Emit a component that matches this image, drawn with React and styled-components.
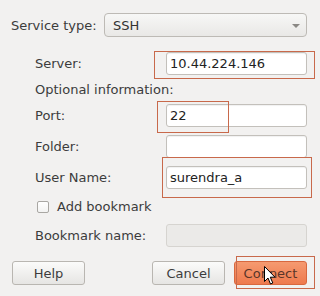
import React from 'react';
import styled, { createGlobalStyle, css } from 'styled-components';

const Global = createGlobalStyle`
  html, body {
    margin: 0;
    background: #f2f1f0;
  }
  body {
    font-family: "DejaVu Sans", "Liberation Sans", sans-serif;
    font-size: 13px;
    color: #3c3c3c;
  }
`

const Page = styled.div`
  width: 320px;
  height: 296px;
  box-sizing: border-box;
  padding: 13px 13px 0 11px;
  overflow: hidden;
`

const TopRow = styled.div`
  display: flex;
  align-items: center;
  height: 24px;
`

const TopLabel = styled.span`
  width: 93px;
`

const Combo = styled.div`
  flex: 1;
  height: 24px;
  box-sizing: border-box;
  display: flex;
  align-items: center;
  justify-content: space-between;
  padding: 0 6px 0 8px;
  border: 1px solid #bdbab5;
  border-radius: 4px;
  background: linear-gradient(#f7f7f6, #e9e8e6);
  color: #333;
`

const Arrow = styled.span`
  width: 0;
  height: 0;
  border-left: 4px solid transparent;
  border-right: 4px solid transparent;
  border-top: 4px solid #8a8884;
  margin-top: 1px;
`

const Form = styled.div`
  display: grid;
  grid-template-columns: 131px 1fr;
  row-gap: 8px;
  align-items: center;
  padding-left: 24px;
  margin-top: 15px;
`

const Label = styled.span`
  line-height: 23px;
`

const Wide = styled.div`
  grid-column: 1 / 3;
  display: flex;
  align-items: center;
  height: ${p => p.$h || 13}px;
`

const Field = styled.div`
  position: relative;
  height: 23px;
`

const Input = styled.div`
  height: 100%;
  box-sizing: border-box;
  padding-left: 3px;
  display: flex;
  align-items: center;
  border: 1px solid #c3c0bb;
  border-radius: 3px;
  background: #fff;
  box-shadow: inset 0 1px 1px rgba(0, 0, 0, 0.06);
  color: #222;
  ${p => p.$disabled && css`
    background: #ebeae8;
    border-color: #d6d4d0;
    box-shadow: none;
  `}
`

const Mark = styled.div`
  position: absolute;
  border: 1px solid #c8694b;
  pointer-events: none;
  left: ${p => p.$l}px;
  top: ${p => p.$t}px;
  ${p => p.$w ? `width: ${p.$w}px;` : `right: ${p.$r}px;`}
  bottom: ${p => p.$b}px;
`

const Check = styled.span`
  width: 12px;
  height: 12px;
  box-sizing: border-box;
  margin: 0 8px 0 2px;
  border: 1px solid #a9a7a3;
  border-radius: 2px;
  background: linear-gradient(#fff, #f3f3f2);
`

const Buttons = styled.div`
  display: flex;
  justify-content: space-between;
  margin-top: 14px;
  padding-left: 1px;
`

const Group = styled.div`
  display: flex;
  gap: 9px;
`

const Button = styled.div`
  position: relative;
  width: 73px;
  height: 24px;
  box-sizing: border-box;
  display: flex;
  align-items: center;
  justify-content: center;
  border: 1px solid #b9b6b1;
  border-radius: 3px;
  background: linear-gradient(#fbfbfa, #e6e5e3);
  color: #3c3c3c;
  ${p => p.$primary && css`
    border-color: #d8683f;
    background: linear-gradient(#f59a70, #ee7a4e);
    color: #5a3528;
  `}
`

const Cursor = styled.svg`
  position: absolute;
  left: 29px;
  top: 4px;
`

export default function App() {
  return (
    <Page>
      <Global />
      <TopRow>
        <TopLabel>Service type:</TopLabel>
        <Combo>SSH<Arrow /></Combo>
      </TopRow>
      <Form>
        <Label>Server:</Label>
        <Field>
          <Input>10.44.224.146</Input>
          <Mark $l={-12} $t={-1} $r={-8} $b={-4} />
        </Field>
        <Wide $h={13}>Optional information:</Wide>
        <Label>Port:</Label>
        <Field>
          <Input>22</Input>
          <Mark $l={-9} $t={-3} $w={70} $b={-6} />
        </Field>
        <Label>Folder:</Label>
        <Field><Input /></Field>
        <Label>User Name:</Label>
        <Field>
          <Input>surendra_a</Input>
          <Mark $l={-4} $t={-9} $r={-5} $b={-9} />
        </Field>
        <Wide $h={19}><Check />Add bookmark</Wide>
        <Label>Bookmark name:</Label>
        <Field><Input $disabled /></Field>
      </Form>
      <Buttons>
        <Button>Help</Button>
        <Group>
          <Button>Cancel</Button>
          <Button $primary>
            Connect
            <Mark $l={1} $t={-6} $r={-9} $b={-5} />
            <Cursor width="12" height="19" viewBox="0 0 12 19">
              <path d="M0.5 0.5 L0.5 15.5 L4 12 L6.5 18 L8.8 17 L6.3 11.2 L11 11.2 Z"
                fill="#fff" stroke="#000" strokeWidth="1" strokeLinejoin="round" />
            </Cursor>
          </Button>
        </Group>
      </Buttons>
    </Page>
  );
}
